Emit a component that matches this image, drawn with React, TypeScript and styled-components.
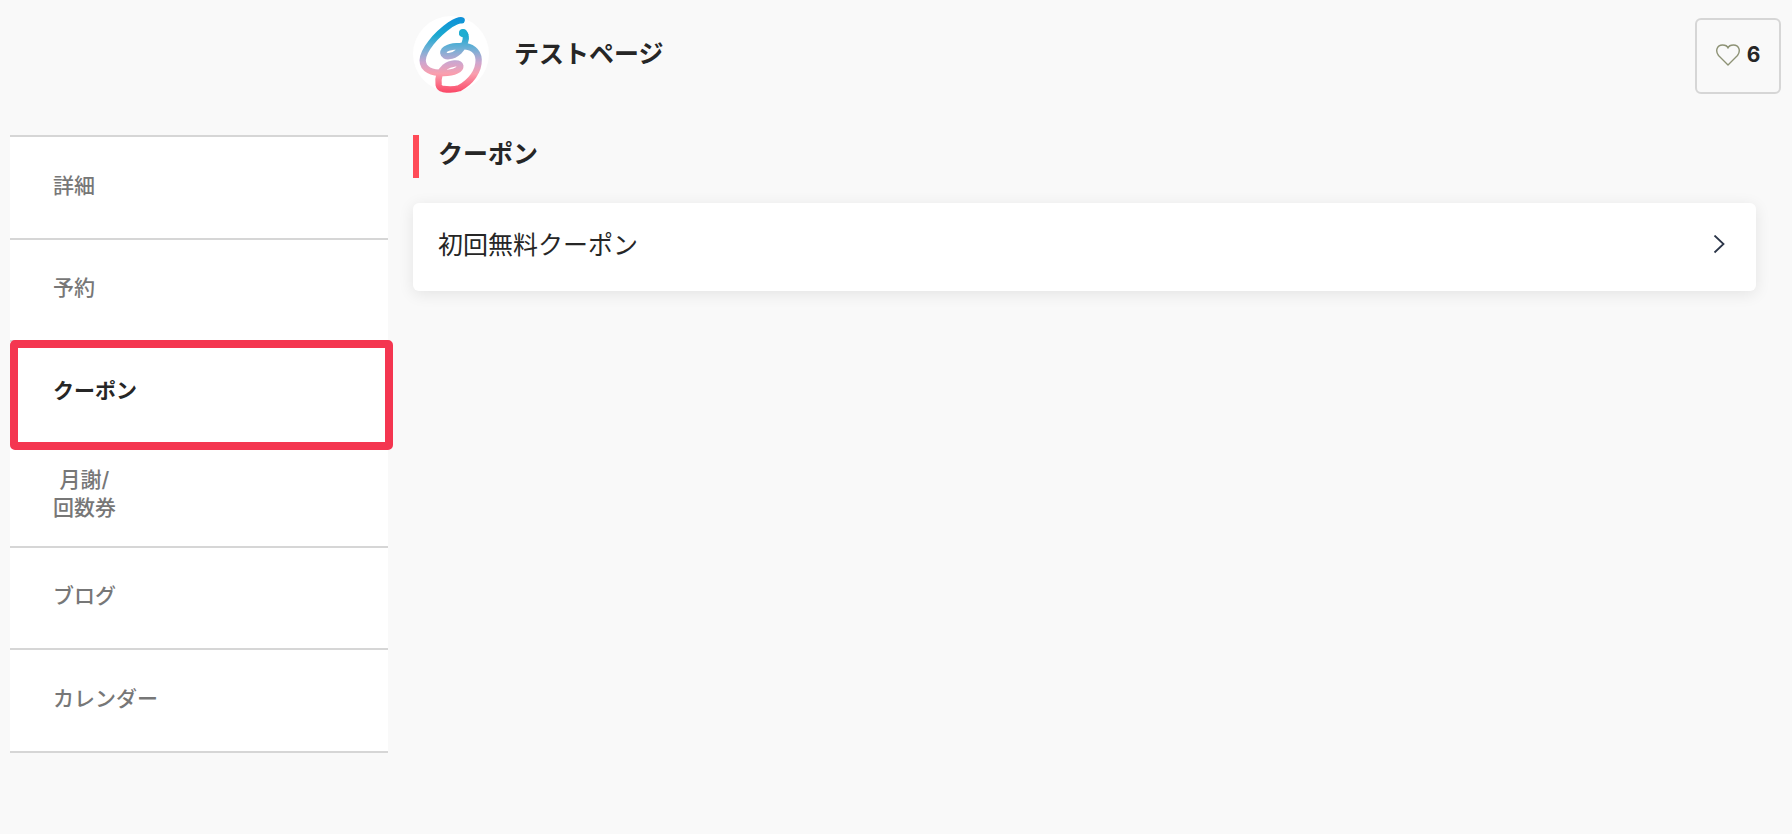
import React from 'react';
import styled, { createGlobalStyle } from 'styled-components';

const GlobalStyle = createGlobalStyle`
  *, *::before, *::after { box-sizing: border-box; }
  body {
    margin: 0;
    background: #f9f9f9;
    color: #262626;
    font-family: Inter, "Noto Sans CJK JP", sans-serif;
  }
  h1, h2, ul { margin: 0; padding: 0; }
`;

const Page = styled.div`
  display: grid;
  grid-template-columns: 378px minmax(0, 1fr);
  column-gap: 25px;
  padding: 15px 11px 80px 10px;
`;

const Header = styled.header`
  grid-column: 2;
  display: flex;
  align-items: center;
  gap: 25px;
  height: 120px;
  padding-bottom: 42px;
`;

const Logo = styled.svg`
  flex: none;
  width: 76px;
  height: 76px;
`;

const Title = styled.h1`
  flex: 1;
  font-size: 25px;
  line-height: 36px;
  font-weight: 700;
`;

const LikeButton = styled.button`
  display: flex;
  align-items: center;
  justify-content: center;
  gap: 7px;
  width: 86px;
  height: 76px;
  margin-top: 4px;
  padding: 0 0 3px;
  border: 2px solid #d6d6d6;
  border-radius: 6px;
  background: transparent;
  color: #262626;
  font: inherit;
  font-size: 21px;
  font-weight: 700;
  cursor: pointer;
`;

const Nav = styled.nav`
  grid-column: 1;
`;

const NavList = styled.ul`
  display: grid;
  grid-auto-rows: 1fr;
  min-height: 618px;
  list-style: none;
  background: #fff;
  border-bottom: 2px solid #d6d6d6;
`;

const NavItem = styled.li`
  position: relative;
  display: grid;
`;

const NavLink = styled.a<{ $active?: boolean }>`
  display: flex;
  align-items: center;
  padding: 0 43px 3px;
  border-top: 2px solid #d6d6d6;
  color: ${p => (p.$active ? '#262626' : '#777')};
  font-size: 21px;
  line-height: 28px;
  font-weight: ${p => (p.$active ? 700 : 500)};
  text-align: center;
  text-decoration: none;
`;

const Highlight = styled.span`
  position: absolute;
  z-index: 1;
  inset: 0 -5px -7px 0;
  border: 8px solid #f43650;
  border-radius: 5px;
  pointer-events: none;
`;

const Content = styled.main`
  padding-right: 25px;
`;

const SectionTitle = styled.h2`
  height: 43px;
  margin-bottom: 25px;
  padding-left: 19px;
  border-left: 6px solid #ff4b58;
  font-size: 25px;
  line-height: 38px;
  font-weight: 700;
`;

const CouponCard = styled.a`
  display: flex;
  align-items: center;
  justify-content: space-between;
  height: 88px;
  padding: 0 31px 5px 25px;
  border-radius: 6px;
  background: #fff;
  box-shadow: 0 3px 16px rgba(0, 0, 0, 0.09);
  color: #262626;
  font-size: 25px;
  line-height: 36px;
  text-decoration: none;
`;

const navItems: { label: React.ReactNode; key: string; active?: boolean }[] = [
  { key: 'detail', label: '詳細' },
  { key: 'reserve', label: '予約' },
  { key: 'coupon', label: 'クーポン', active: true },
  { key: 'ticket', label: <>月謝/<br />回数券</> },
  { key: 'blog', label: 'ブログ' },
  { key: 'calendar', label: 'カレンダー' },
];

export default function App() {
  return (
    <>
      <GlobalStyle />
      <Page>
        <Header>
          <Logo viewBox="38 45 228 228" overflow="visible" aria-hidden="true">
            <defs>
              <linearGradient id="ribbon" gradientUnits="userSpaceOnUse" x1="0" y1="48" x2="0" y2="275">
                <stop offset="0" stopColor="#0d8fd8" />
                <stop offset="0.24" stopColor="#1ba9d0" />
                <stop offset="0.42" stopColor="#6fb0d6" />
                <stop offset="0.6" stopColor="#cda6cf" />
                <stop offset="0.75" stopColor="#fa9fae" />
                <stop offset="1" stopColor="#fb4766" />
              </linearGradient>
            </defs>
            <circle cx="152" cy="159" r="114" fill="#fff" />
            <path
              d="M184 58Q174 56 150 71C106 102 68 148 67 178C67 206 95 216 130 216C164 216 181 204 180 195C177 183 150 186 134 198C118 212 112 232 115 252Q117 262 128 264C144 266 163 266 176 262C212 243 236 210 235 176C234 150 214 134 180 135C150 135 129 143 129 156C131 171 157 168 176 151C192 136 199 116 196 104C194 94 187 93 186 97"
              fill="none" stroke="url(#ribbon)" strokeWidth="19" strokeLinecap="round" strokeLinejoin="round"
            />
            <circle cx="188" cy="96" r="12" fill="#1fadd1" />
          </Logo>
          <Title>テストページ</Title>
          <LikeButton type="button" aria-label="お気に入り 6">
            <svg width="24" height="22" viewBox="0 0 24 22" fill="none" stroke="#8d9275" strokeWidth="1.4" strokeLinejoin="round" aria-hidden="true">
              <path d="M12 21L2.500 11.500C-1 7 1 1 6.500 1C9.500 1 11.500 2.500 12 4C12.500 2.500 14.500 1 17.500 1C23 1 25 7 21.500 11.500Z" />
            </svg>
            6
          </LikeButton>
        </Header>
        <Nav>
          <NavList>
            {navItems.map(item => (
              <NavItem key={item.key}>
                <NavLink href={`#${item.key}`} $active={item.active}>
                  <span>{item.label}</span>
                </NavLink>
                {item.active && <Highlight />}
              </NavItem>
            ))}
          </NavList>
        </Nav>
        <Content>
          <SectionTitle>クーポン</SectionTitle>
          <CouponCard href="#first-coupon">
            初回無料クーポン
            <svg width="12" height="20" viewBox="0 0 12 20" fill="none" stroke="#2b3548" strokeWidth="1.8" aria-hidden="true">
              <path d="M1.500 0.500L10.500 9L1.500 17.500" />
            </svg>
          </CouponCard>
        </Content>
      </Page>
    </>
  );
}
